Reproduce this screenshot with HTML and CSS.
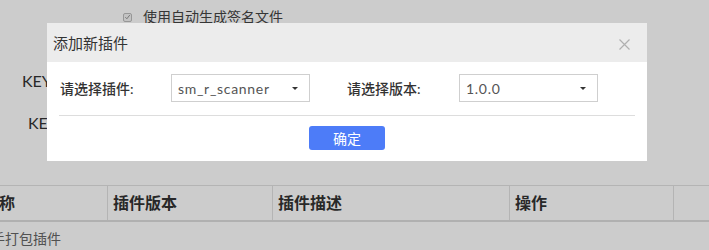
FILE: index.html
```html
<!DOCTYPE html>
<html lang="zh-CN">
<head>
<meta charset="utf-8">
<link rel="stylesheet" href="styles.css">
</head>
<body>
<div class="page">
  <div class="sign-row">
    <span class="checkbox"><svg width="8" height="8" viewBox="0 0 8 8"><path d="M1.5 4.2 L3.3 6 L6.6 1.8" fill="none" stroke="#888" stroke-width="1"/></svg></span>
    <span class="sign-text">使用自动生成签名文件</span>
  </div>
  <div class="key-row key-a">KEY</div>
  <div class="key-row key-b">KEY</div>
  <div class="plugin-table">
    <div class="thead">
      <div class="th">名称</div>
      <div class="th">插件版本</div>
      <div class="th">插件描述</div>
      <div class="th">操作</div>
      <div class="th"></div>
    </div>
    <div class="trow">
      <div class="td first">手打包插件</div>
    </div>
  </div>
</div>

<div class="overlay"></div>
<div class="dialog">
  <div class="dialog-header">
    <span class="dialog-title">添加新插件</span>
    <svg class="close" width="13" height="11" viewBox="0 0 13 11"><path d="M1.5 0.5 L11.5 10.5 M11.5 0.5 L1.5 10.5" stroke="#b0b0b0" stroke-width="1.2" fill="none"/></svg>
  </div>
  <div class="dialog-body">
    <div class="form-row">
      <div class="form-item">
        <span class="label">请选择插件:</span>
        <span class="select"><span class="select-text">sm_r_scanner</span><span class="caret"></span></span>
      </div>
      <div class="form-item">
        <span class="label label-wide">请选择版本:</span>
        <span class="select"><span class="select-text">1.0.0</span><span class="caret"></span></span>
      </div>
    </div>
    <div class="divider"></div>
    <div class="actions"><button class="btn-primary">确定</button></div>
  </div>
</div>
</body>
</html>
```

FILE: styles.css
```css
html, body {
  margin: 0;
  padding: 0;
  background: #ffffff;
  font-family: "Lato", "Noto Sans CJK SC", sans-serif;
  overflow: hidden;
  width: 709px;
  height: 250px;
}

.page {
  display: flex;
  flex-direction: column;
}

.sign-row {
  display: flex;
  align-items: center;
  gap: 11px;
  padding: 8px 0 0 123px;
  height: 18px;
}

.checkbox {
  width: 9px;
  height: 9px;
  border: 1px solid #bdbdbd;
  border-radius: 2px;
  box-sizing: border-box;
  display: flex;
  align-items: center;
  justify-content: center;
  background: #f4f4f4;
}

.checkbox svg { display: block; }

.sign-text {
  font-size: 14px;
  color: #444;
  line-height: 18px;
}

.key-row {
  font-size: 16px;
  color: #333;
  line-height: 20px;
  white-space: nowrap;
}

.key-a { margin-top: 45px; padding-left: 22px; }
.key-b { margin-top: 22px; padding-left: 28px; }

.plugin-table {
  margin-top: 52px;
  margin-left: -22px;
  width: 760px;
}

.thead {
  display: grid;
  grid-template-columns: 130px 165px 237px 164px 1fr;
  border-top: 1px solid #e2e2e2;
  border-bottom: 2px solid #dcdcdc;
  height: 34px;
}

.th {
  font-size: 16px;
  font-weight: bold;
  color: #333;
  line-height: 34px;
  padding-left: 5px;
  border-right: 1px solid #e2e2e2;
  white-space: nowrap;
}

.th:last-child { border-right: none; }

.trow {
  height: 34px;
  display: flex;
  align-items: center;
}

.td {
  font-size: 14px;
  color: #666;
  line-height: 20px;
}

.td.first { padding-left: 13px; }

.overlay {
  position: fixed;
  inset: 0;
  background: rgba(0, 0, 0, 0.2);
}

.dialog {
  position: fixed;
  left: 47px;
  top: 23px;
  width: 600px;
  background: #fff;
}

.dialog-header {
  height: 39px;
  background: #ececec;
  display: flex;
  align-items: center;
  justify-content: space-between;
  padding: 0 16px 0 6px;
}

.dialog-title {
  font-size: 15px;
  color: #333;
  font-family: "Noto Sans CJK SC", sans-serif;
}

.close {
  display: block;
  margin-top: 4px;
}

.dialog-body {
  padding: 12px 12px 11px;
}

.form-row {
  display: flex;
  align-items: center;
  gap: 36px;
}

.form-item {
  display: flex;
  align-items: center;
}

.label {
  width: 112px;
  padding-left: 1px;
  box-sizing: border-box;
  font-size: 14px;
  color: #333;
  font-weight: 500;
}

.label-wide { width: 113px; }

.select {
  width: 139px;
  height: 28px;
  box-sizing: border-box;
  border: 1px solid #cfcfcf;
  display: flex;
  align-items: center;
  justify-content: space-between;
  padding: 0 11px 0 6px;
}

.select-text {
  font-size: 14px;
  color: #555;
  letter-spacing: 0.7px;
}

.caret {
  width: 0;
  height: 0;
  border-left: 3px solid transparent;
  border-right: 3px solid transparent;
  border-top: 3px solid #333;
}

.divider {
  height: 1px;
  background: #dddddd;
  margin-top: 13px;
}

.actions {
  display: flex;
  justify-content: center;
  margin-top: 10px;
}

.btn-primary {
  width: 76px;
  height: 24px;
  border: none;
  border-radius: 3px;
  background: #4d7cf8;
  color: #fff;
  font-size: 14px;
  font-family: "Noto Sans CJK SC", sans-serif;
  padding: 0;
  line-height: 24px;
}
```
